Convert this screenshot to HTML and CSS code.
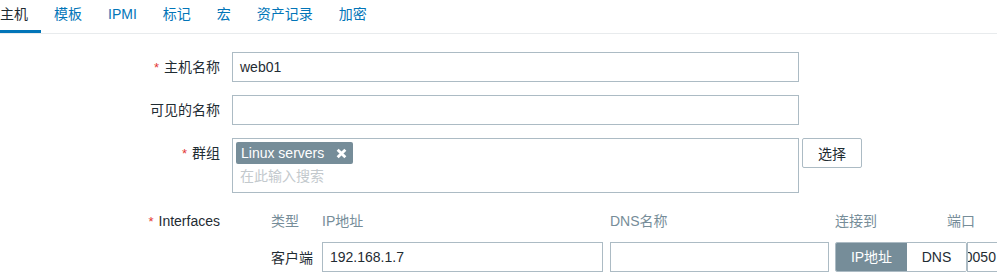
FILE: index.html
```html
<!DOCTYPE html>
<html lang="zh-CN">
<head>
<meta charset="utf-8">
<title>主机</title>
<link rel="stylesheet" href="styles.css">
</head>
<body>
<nav class="tabs">
  <a class="tab active">主机</a>
  <a class="tab">模板</a>
  <a class="tab">IPMI</a>
  <a class="tab">标记</a>
  <a class="tab">宏</a>
  <a class="tab">资产记录</a>
  <a class="tab">加密</a>
</nav>
<form class="form">
  <label class="label"><span class="req">*</span>主机名称</label>
  <div class="field"><div class="input wide">web01</div></div>

  <label class="label">可见的名称</label>
  <div class="field"><div class="input wide"></div></div>

  <label class="label top"><span class="req">*</span>群组</label>
  <div class="field row">
    <div class="multiselect">
      <div class="chips">
        <span class="chip">Linux servers<svg class="chip-x" viewBox="0 0 10 10" width="11" height="11"><path d="M1.5 1.5 L8.5 8.5 M8.5 1.5 L1.5 8.5" stroke="#fff" stroke-width="2.6" stroke-linecap="butt"/></svg></span>
      </div>
      <div class="ms-input">在此输入搜索</div>
    </div>
    <button type="button" class="btn">选择</button>
  </div>

  <label class="label top"><span class="req">*</span>Interfaces</label>
  <div class="field">
    <div class="if-head">
      <span class="c-type">类型</span>
      <span class="c-ip">IP地址</span>
      <span class="c-dns">DNS名称</span>
      <span class="c-conn">连接到</span>
      <span class="c-port">端口</span>
    </div>
    <div class="if-row">
      <span class="if-type">客户端</span>
      <div class="input ip">192.168.1.7</div>
      <div class="input dns"></div>
      <div class="toggle"><span class="tg on">IP地址</span><span class="tg">DNS</span></div>
      <div class="input port"><span class="port-text">10050</span></div>
    </div>
  </div>
</form>
</body>
</html>
```
FILE: styles.css
```css
* { box-sizing: border-box; }
html, body { margin: 0; padding: 0; background: #fff; }
body {
  font-family: "Liberation Sans", Arial, "Noto Sans CJK SC", sans-serif;
  font-size: 14px;
  color: #1f2c33;
  width: 997px;
  height: 277px;
  overflow: hidden;
}
.tabs {
  display: flex;
  margin-left: -13px;
  border-bottom: 1px solid #e8ebed;
  height: 34px;
}
.tab {
  display: block;
  padding: 0 13px;
  height: 33px;
  line-height: 29px;
  color: #0275b8;
  border-bottom: 3px solid transparent;
  white-space: nowrap;
}
.tab.active {
  color: #1f2c33;
  border-bottom-color: #0275b8;
}
.form {
  display: grid;
  grid-template-columns: 220px 1fr;
  column-gap: 12px;
  row-gap: 13px;
  padding-top: 18px;
}
.label {
  text-align: right;
  line-height: 30px;
  height: 30px;
  white-space: nowrap;
}
.label.top { align-self: start; }
.req {
  color: #e33734;
  margin-right: 5px;
  font-size: 13px;
}
.field { min-width: 0; }
.row { display: flex; align-items: flex-start; }
.input {
  height: 30px;
  border: 1px solid #acbbc4;
  background: #fff;
  padding: 0 7px;
  line-height: 28px;
  white-space: nowrap;
  overflow: hidden;
}
.wide { width: 567px; }
.multiselect {
  width: 567px;
  height: 55px;
  border: 1px solid #acbbc4;
  padding: 3px 3px 0;
  flex-shrink: 0;
}
.chips { display: flex; height: 22px; }
.chip {
  display: flex;
  align-items: center;
  height: 22px;
  background: #768d99;
  color: #fff;
  border-radius: 2px;
  padding: 0 6px 0 5px;
  line-height: 22px;
}
.chip-x { margin-left: 12px; }
.ms-input {
  color: #c3c9cd;
  height: 24px;
  line-height: 24px;
  padding-left: 4px;
}
.btn {
  margin-left: 3px;
  width: 60px;
  height: 30px;
  flex-shrink: 0;
  border: 1px solid #acbbc4;
  border-radius: 2px;
  background: #fff;
  color: #1f2c33;
  font: inherit;
  padding: 0;
}
.if-head {
  display: flex;
  height: 30px;
  line-height: 30px;
  color: #768d99;
  padding-left: 39px;
  white-space: nowrap;
}
.if-head > span { flex-shrink: 0; }
.c-type { width: 51px; }
.c-ip { width: 288px; }
.c-dns { width: 225px; }
.c-conn { width: 112px; }
.if-row {
  display: flex;
  margin-top: 6px;
  padding-left: 39px;
  align-items: center;
  white-space: nowrap;
}
.if-row > * { flex-shrink: 0; }
.if-type { width: 51px; }
.ip { width: 281px; }
.dns { width: 219px; margin-left: 7px; }
.toggle {
  display: flex;
  margin-left: 6px;
  height: 30px;
  border: 1px solid #acbbc4;
  border-radius: 2px;
  overflow: hidden;
}
.tg {
  width: 59px;
  line-height: 28px;
  text-align: center;
  color: #1f2c33;
  background: #fff;
}
.tg.on {
  width: 71px;
  background: #768d99;
  color: #fff;
}
.port {
  width: 60px;
  margin-left: 0;
  padding: 0;
  text-indent: -11px;
}
```
